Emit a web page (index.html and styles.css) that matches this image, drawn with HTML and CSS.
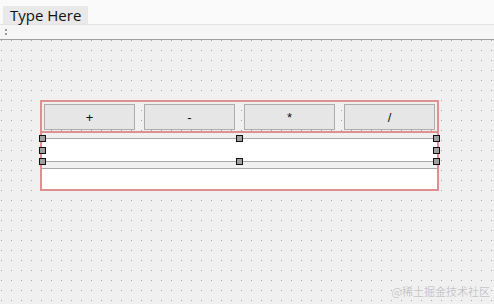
FILE: index.html
```html
<!DOCTYPE html>
<html lang="en">
<head>
    <meta charset="UTF-8">
    <title>Form Editor</title>
    <link rel="stylesheet" href="styles.css">
</head>
<body>
    <div class="window">
        <div class="menubar">
            <div class="menu-item">Type Here</div>
        </div>
        <div class="toolbar">
            <div class="grip"><span></span><span></span></div>
        </div>
        <div class="form">
            <div class="layout">
                <div class="button-row">
                    <button class="push-btn">+</button>
                    <button class="push-btn">-</button>
                    <button class="push-btn">*</button>
                    <button class="push-btn">/</button>
                </div>
                <div class="edit-area">
                    <div class="line-edit selected">
                        <span class="handle h-tl"></span>
                        <span class="handle h-tc"></span>
                        <span class="handle h-tr"></span>
                        <span class="handle h-ml"></span>
                        <span class="handle h-mr"></span>
                        <span class="handle h-bl"></span>
                        <span class="handle h-bc"></span>
                        <span class="handle h-br"></span>
                    </div>
                    <div class="line-edit last"></div>
                </div>
            </div>
            <div class="watermark">@稀土掘金技术社区</div>
        </div>
    </div>
</body>
</html>
```

FILE: styles.css
```css
body {
    margin: 0;
    background: #f0f0f0;
    font-family: "Open Sans", "Noto Sans", sans-serif;
}
.window {
    width: 494px;
    height: 304px;
    display: flex;
    flex-direction: column;
    overflow: hidden;
}
.menubar {
    height: 25px;
    background: #fafafa;
    border-bottom: 1px solid #e3e3e3;
    box-sizing: border-box;
    padding: 4px 0 0 3px;
}
.menu-item {
    display: inline-block;
    height: 18px;
    line-height: 18px;
    padding: 0 7px 0 7px;
    background: #e9e9e9;
    font-size: 15px;
    color: #111;
}
.toolbar {
    height: 15px;
    background: #f5f5f5;
    border-bottom: 1px solid #a0a0a0;
    box-sizing: border-box;
    padding: 4px 0 0 5px;
}
.grip {
    display: flex;
    flex-direction: column;
    gap: 2px;
}
.grip span {
    width: 2px;
    height: 2px;
    background: #9a9a9a;
}
/* designer grid: one dot every 10px */
.form {
    flex: 1;
    position: relative;
    background-color: #f0f0f0;
    background-image: url("data:image/svg+xml,%3Csvg xmlns='http://www.w3.org/2000/svg' width='10' height='10'%3E%3Crect x='1' y='0' width='1' height='1' fill='%23a4a4a4'/%3E%3C/svg%3E");
    background-size: 10px 10px;
    padding: 60px 0 0 40px;
}
.layout {
    width: 399px;
    box-sizing: border-box;
    border: 2px solid #de8f8f;
}
.button-row {
    display: flex;
    gap: 9px;
    padding: 2px 2px 1px 2px;
    border-bottom: 2px solid #de8f8f;
}
.push-btn {
    width: 91px;
    height: 26px;
    box-sizing: border-box;
    background: #e6e6e6;
    border: 1px solid #adadad;
    font-family: "Liberation Sans", sans-serif;
    font-size: 13px;
    color: #111;
    padding: 0;
}
.edit-area {
    display: flex;
    flex-direction: column;
    gap: 6px;
    padding-top: 5px;
}
.line-edit {
    position: relative;
    height: 22px;
    background: #fff;
    border-top: 1px solid #a8a8a8;
    border-bottom: 1px solid #a8a8a8;
}
.line-edit.last {
    height: 20px;
    border-bottom: none;
}
.handle {
    position: absolute;
    width: 5px;
    height: 5px;
    background: #a0a0a0;
    border: 1px solid #111;
}
.h-tl, .h-tc, .h-tr { top: -4px; }
.h-ml, .h-mr { top: 8px; }
.h-bl, .h-bc, .h-br { bottom: -4px; }
.h-tl, .h-ml, .h-bl { left: -3px; }
.h-tc, .h-bc { left: 194px; }
.h-tr, .h-mr, .h-br { right: -3px; }
.watermark {
    position: absolute;
    right: 4px;
    bottom: 5px;
    font-family: "Noto Sans CJK SC", sans-serif;
    font-size: 11px;
    color: #c4c4c4;
    text-shadow: 0 0 1px #fff;
}
```
